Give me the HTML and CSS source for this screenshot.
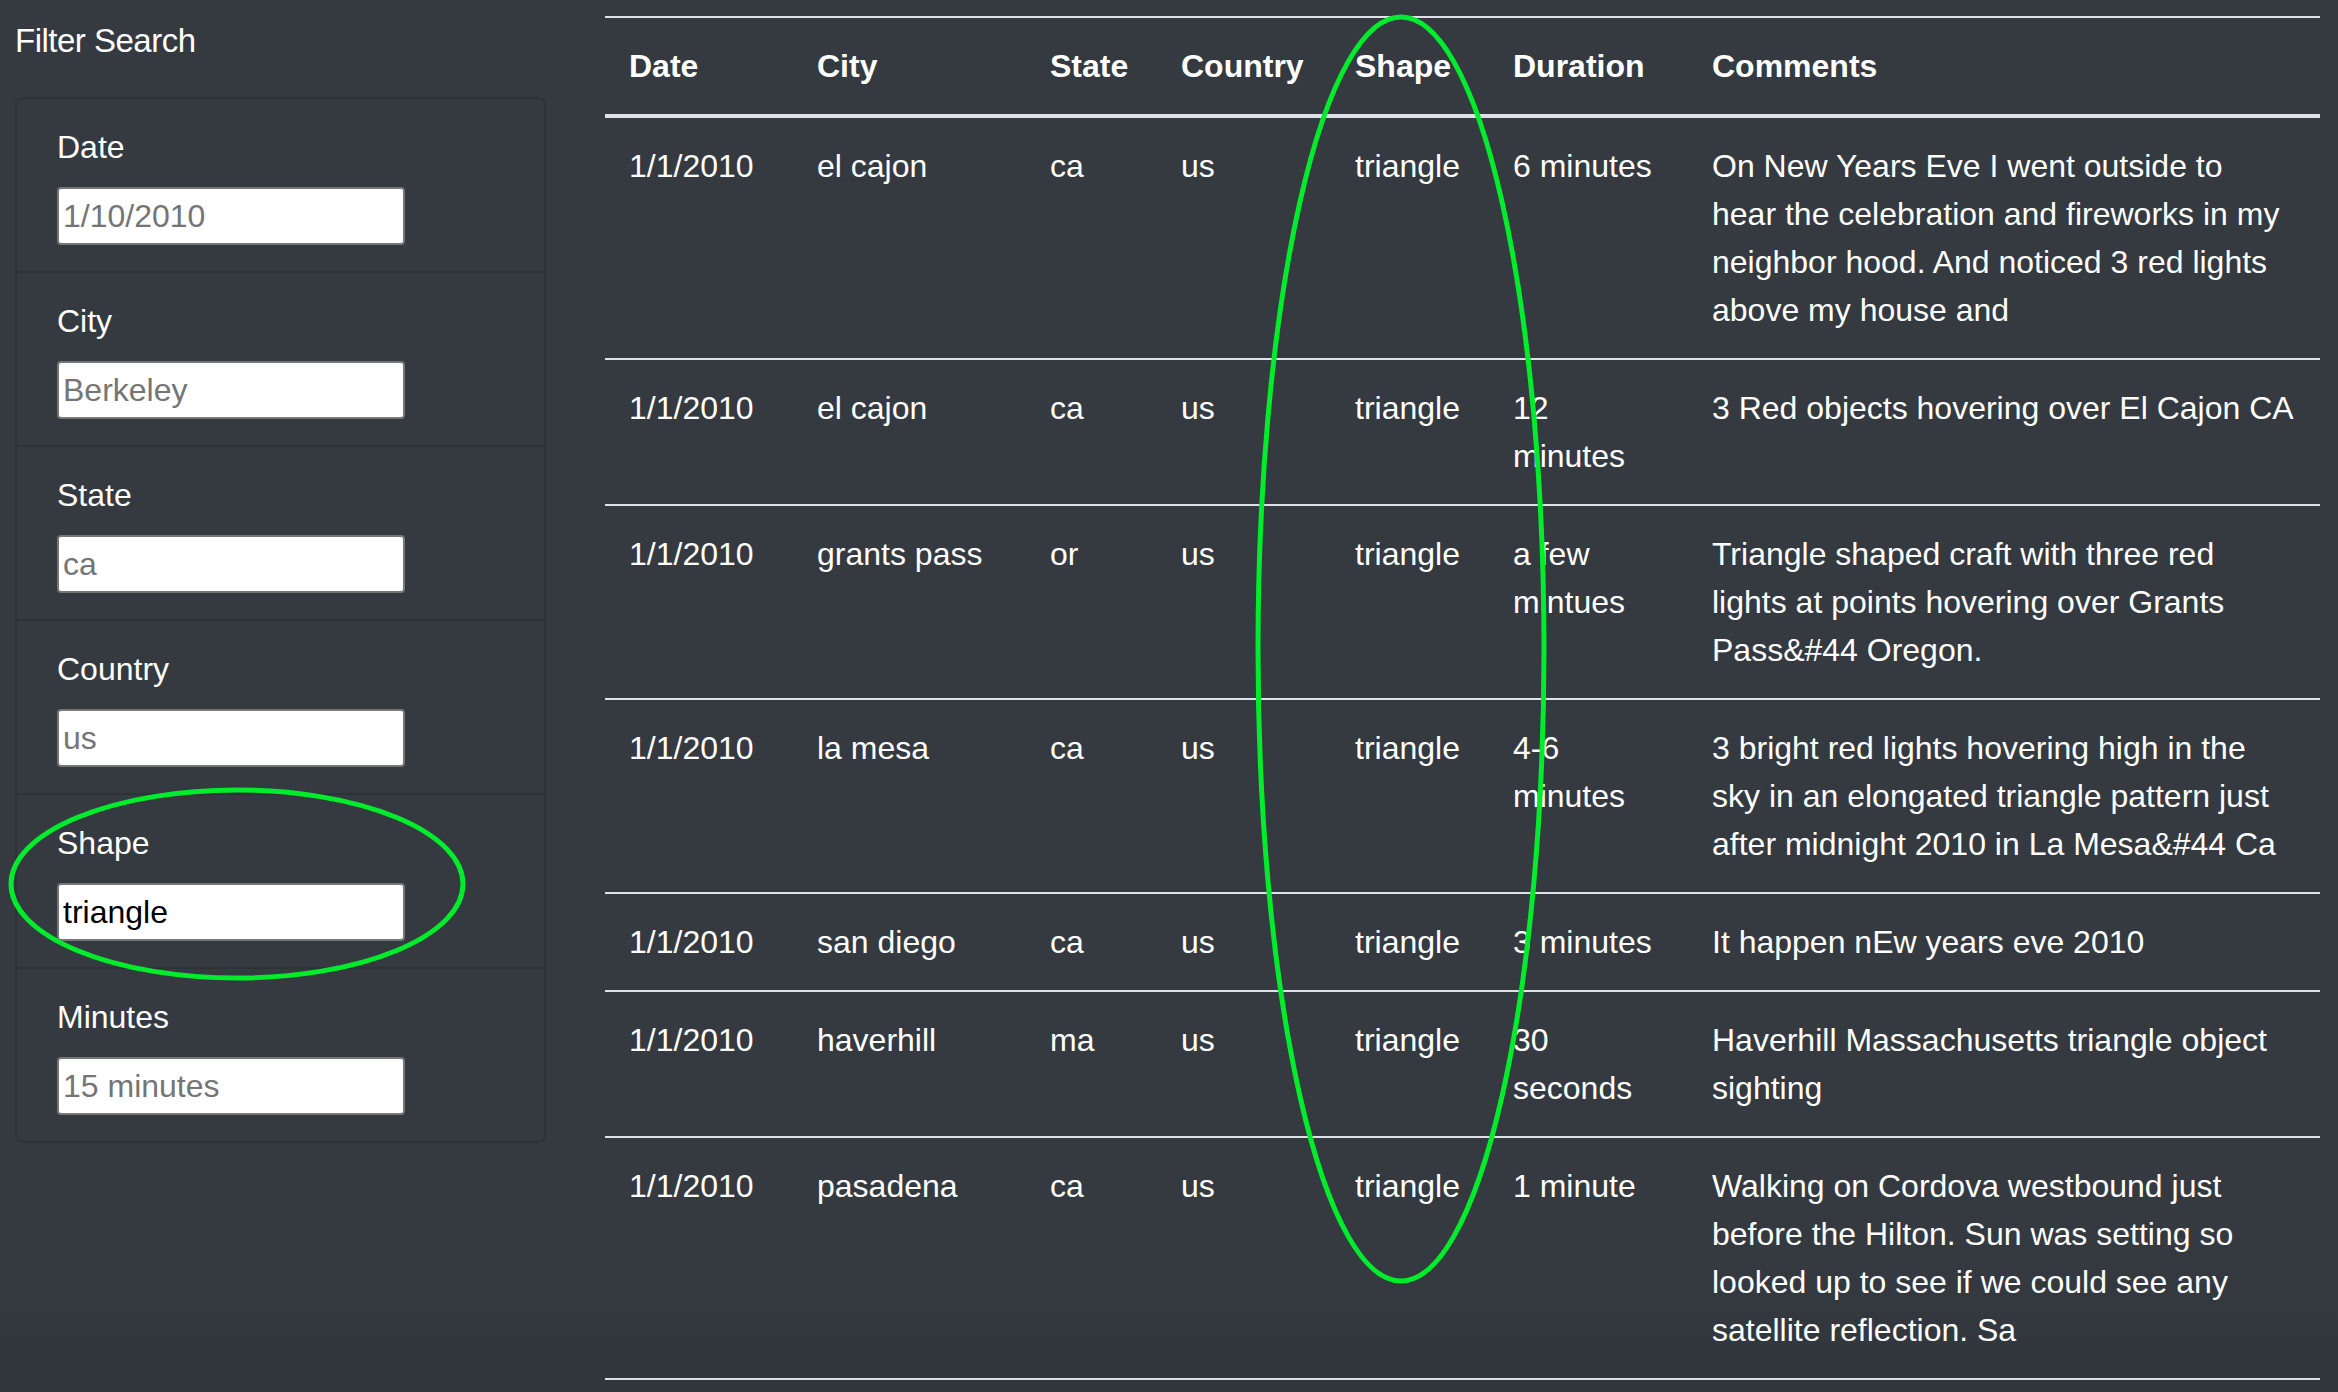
FILE: index.html
```html
<!DOCTYPE html>
<html lang="en">
<head>
<meta charset="utf-8">
<title>UFO Sightings</title>
<link rel="stylesheet" href="styles.css">
</head>
<body>
<div class="page">
  <aside class="sidebar">
    <h5 class="sidebar-title">Filter Search</h5>
    <form class="filters">
      <ul class="filter-list">
        <li class="filter-item">
          <label class="filter-label" for="datetime">Date</label>
          <input class="filter-input" type="text" id="datetime" placeholder="1/10/2010">
        </li>
        <li class="filter-item">
          <label class="filter-label" for="city">City</label>
          <input class="filter-input" type="text" id="city" placeholder="Berkeley">
        </li>
        <li class="filter-item">
          <label class="filter-label" for="state">State</label>
          <input class="filter-input" type="text" id="state" placeholder="ca">
        </li>
        <li class="filter-item">
          <label class="filter-label" for="country">Country</label>
          <input class="filter-input" type="text" id="country" placeholder="us">
        </li>
        <li class="filter-item">
          <label class="filter-label" for="shape">Shape</label>
          <input class="filter-input" type="text" id="shape" value="triangle">
        </li>
        <li class="filter-item">
          <label class="filter-label" for="minutes">Minutes</label>
          <input class="filter-input" type="text" id="minutes" placeholder="15 minutes">
        </li>
      </ul>
    </form>
  </aside>

  <main class="results">
    <table class="ufo-table">
      <colgroup>
        <col class="c-date">
        <col class="c-city">
        <col class="c-state">
        <col class="c-country">
        <col class="c-shape">
        <col class="c-duration">
        <col class="c-comments">
      </colgroup>
      <thead>
        <tr>
          <th>Date</th>
          <th>City</th>
          <th>State</th>
          <th>Country</th>
          <th>Shape</th>
          <th>Duration</th>
          <th>Comments</th>
        </tr>
      </thead>
      <tbody>
        <tr>
          <td>1/1/2010</td><td>el cajon</td><td>ca</td><td>us</td><td>triangle</td><td>6 minutes</td>
          <td>On New Years Eve I went outside to<br>hear the celebration and fireworks in my neighbor hood. And noticed 3 red lights above my house and</td>
        </tr>
        <tr>
          <td>1/1/2010</td><td>el cajon</td><td>ca</td><td>us</td><td>triangle</td><td>12 minutes</td>
          <td>3 Red objects hovering over El Cajon CA</td>
        </tr>
        <tr>
          <td>1/1/2010</td><td>grants pass</td><td>or</td><td>us</td><td>triangle</td><td>a few mintues</td>
          <td>Triangle shaped craft with three red lights at points hovering over Grants Pass&amp;#44 Oregon.</td>
        </tr>
        <tr>
          <td>1/1/2010</td><td>la mesa</td><td>ca</td><td>us</td><td>triangle</td><td>4-6 minutes</td>
          <td>3 bright red lights hovering high in the sky in an elongated triangle pattern just after midnight 2010 in La Mesa&amp;#44 Ca</td>
        </tr>
        <tr>
          <td>1/1/2010</td><td>san diego</td><td>ca</td><td>us</td><td>triangle</td><td>3 minutes</td>
          <td>It happen nEw years eve 2010</td>
        </tr>
        <tr>
          <td>1/1/2010</td><td>haverhill</td><td>ma</td><td>us</td><td>triangle</td><td>30 seconds</td>
          <td>Haverhill Massachusetts triangle object sighting</td>
        </tr>
        <tr>
          <td>1/1/2010</td><td>pasadena</td><td>ca</td><td>us</td><td>triangle</td><td>1 minute</td>
          <td>Walking on Cordova westbound just before the Hilton. Sun was setting so looked up to see if we could see any satellite reflection. Sa</td>
        </tr>
      </tbody>
    </table>
  </main>
</div>

<svg class="annotations" width="2338" height="1392" viewBox="0 0 2338 1392" aria-hidden="true">
  <ellipse cx="237" cy="884" rx="226" ry="94" class="mark"/>
  <ellipse cx="1401" cy="649" rx="143" ry="632" class="mark"/>
</svg>
</body>
</html>
```

FILE: styles.css
```css
html, body {
  margin: 0;
  padding: 0;
}

body {
  position: relative;
  background: linear-gradient(to bottom, #343a40 0, #343a40 1250px, #31363c 1392px);
  color: #ffffff;
  font-family: "Liberation Sans", Arial, sans-serif;
  font-size: 32px;
  line-height: 48px;
  min-height: 1392px;
  overflow: hidden;
}

.page {
  display: flex;
  align-items: flex-start;
  padding: 0 18px 0 15px;
}

/* ---------- Sidebar ---------- */
.sidebar {
  width: 531px;
  flex: 0 0 531px;
}

.sidebar-title {
  margin: 20px 0 0;
  font-size: 33px;
  line-height: 41px;
  letter-spacing: -0.5px;
  font-weight: 400;
}

.filters {
  margin: 36px 0 0;
}

.filter-list {
  list-style: none;
  margin: 0;
  padding: 0;
  border: 2px solid #2d3237;
  border-radius: 8px;
  overflow: hidden;
}

.filter-item {
  display: flex;
  flex-direction: column;
  align-items: flex-start;
  padding: 24px 40px 26px;
  border-bottom: 2px solid #2d3237;
}

.filter-item:last-child {
  border-bottom: 0;
}

.filter-label {
  display: block;
  margin-bottom: 16px;
  line-height: 48px;
}

.filter-input {
  box-sizing: border-box;
  width: 348px;
  height: 58px;
  margin: 0;
  padding: 0 4px;
  border: 2px solid #767676;
  border-radius: 4px;
  background: #ffffff;
  color: #000000;
  font-family: "Liberation Sans", Arial, sans-serif;
  font-size: 32px;
  outline: none;
}

.filter-input::placeholder {
  color: #757575;
  opacity: 1;
}

/* ---------- Table ---------- */
.results {
  flex: 1 1 auto;
  margin-left: 59px;
  padding-top: 16px;
}

.ufo-table {
  width: 1715px;
  table-layout: fixed;
  border-collapse: collapse;
  color: #ffffff;
}

.c-date { width: 188px; }
.c-city { width: 233px; }
.c-state { width: 131px; }
.c-country { width: 174px; }
.c-shape { width: 158px; }
.c-duration { width: 199px; }
.c-comments { width: 632px; }

.ufo-table th,
.ufo-table td {
  padding: 24px;
  text-align: left;
  line-height: 48px;
}

.ufo-table thead th {
  font-weight: 700;
  vertical-align: bottom;
  border-top: 2px solid #dee2e6;
  border-bottom: 4px solid #dee2e6;
}

.ufo-table td {
  vertical-align: top;
  font-weight: 400;
}

.ufo-table tbody tr {
  border-bottom: 2px solid #dee2e6;
}

/* ---------- Annotation overlay ---------- */
.annotations {
  position: absolute;
  top: 0;
  left: 0;
  pointer-events: none;
}

.mark {
  fill: none;
  stroke: #00ec2c;
  stroke-width: 5;
}
```
